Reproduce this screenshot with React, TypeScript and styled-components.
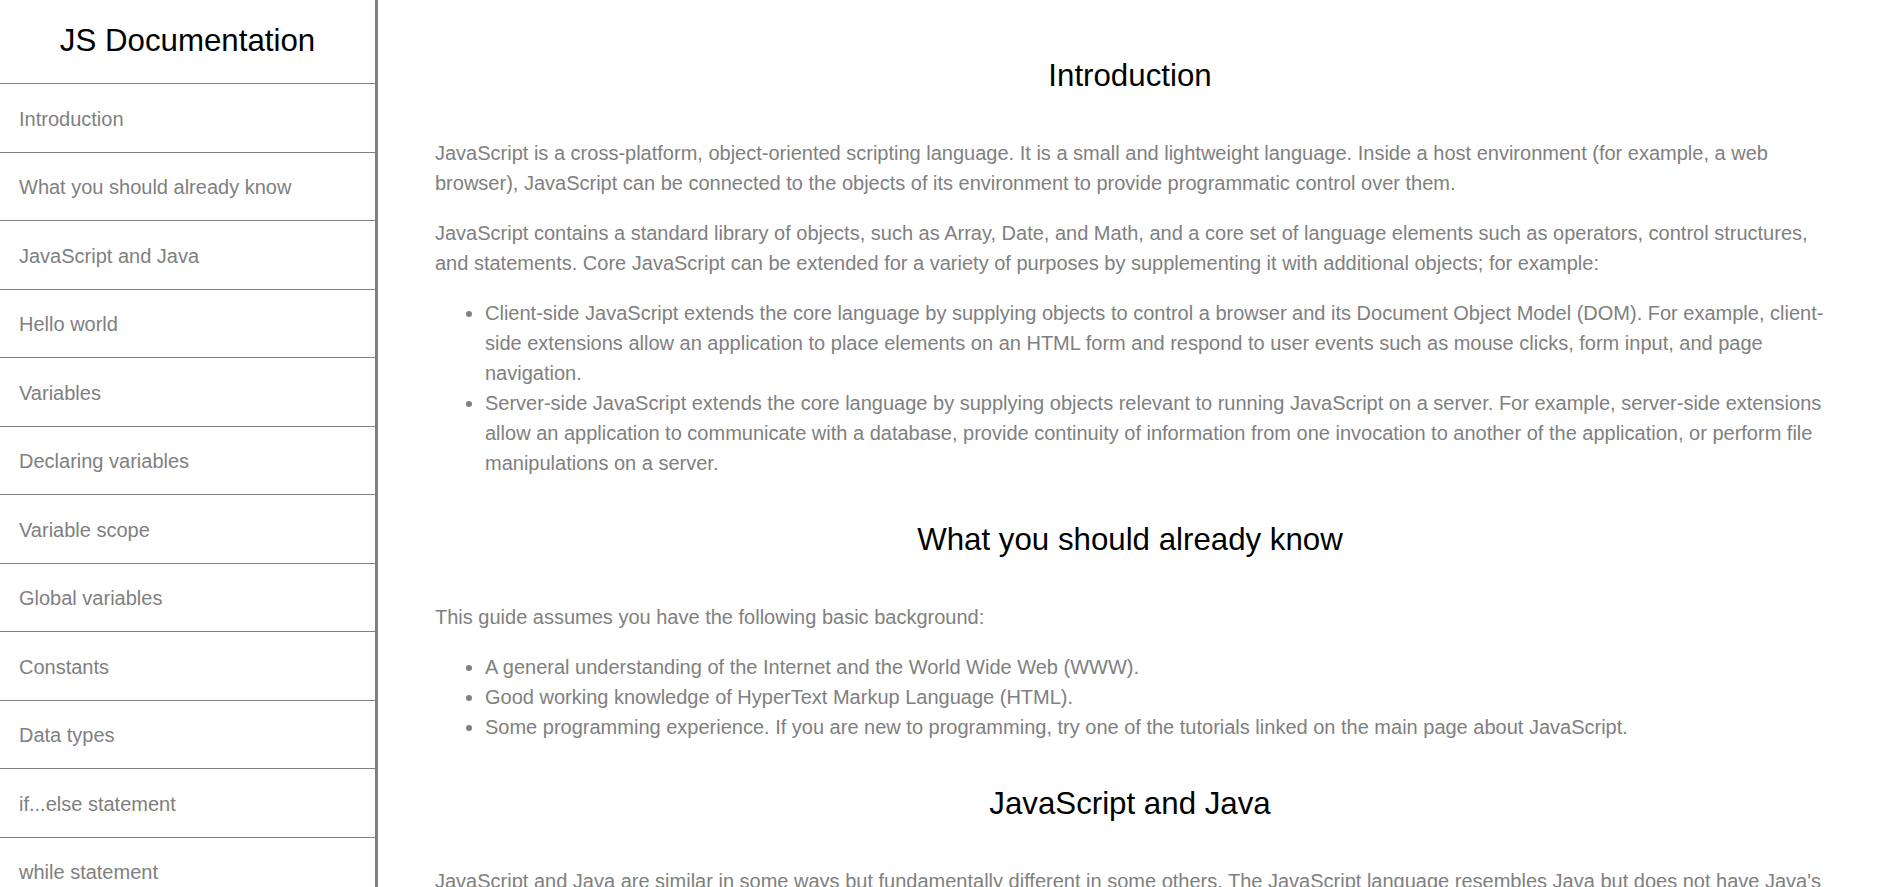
import React from "react";
import styled, { createGlobalStyle } from "styled-components";

const GlobalStyle = createGlobalStyle`
  html, body {
    margin: 0;
    padding: 0;
    height: 100%;
    overflow: hidden;
    background: #ffffff;
  }
  body {
    font-family: "Liberation Sans", Arial, "Helvetica Neue", sans-serif;
  }
  * { box-sizing: border-box; }
`;

const Page = styled.div`
  display: flex;
  height: 100vh;
  overflow: hidden;
`;

const Nav = styled.nav`
  flex: 0 0 378px;
  width: 378px;
  height: 100%;
  border-right: 3px solid #808080;
  overflow: hidden;
  display: flex;
  flex-direction: column;
`;

const NavHeader = styled.header`
  margin: 0;
  padding: 23px 0 24px;
  height: 84px;
  font-size: 31.25px;
  line-height: 36px;
  font-weight: 400;
  color: #000;
  text-align: center;
  border-bottom: 1px solid #808080;
`;

const NavList = styled.ul`
  list-style: none;
  margin: 0;
  padding: 0;
`;

const NavItem = styled.li`
  border-bottom: 1px solid #808080;
`;

const NavLink = styled.a`
  display: block;
  padding: 24.5px 19px 22px;
  font-size: 20px;
  line-height: 21px;
  color: #808080;
  text-decoration: none;
`;

const Main = styled.main`
  flex: 1 1 auto;
  height: 100%;
  overflow: hidden;
  padding: 14px 72px 0 57px;
  color: #808080;
  font-size: 20px;
  line-height: 30px;
`;

const Section = styled.section``;

const SectionTitle = styled.header`
  margin: 44px 0 44px;
  font-size: 31.25px;
  line-height: 36px;
  font-weight: 400;
  color: #000;
  text-align: center;
`;

const Para = styled.p`
  margin: 20px 0;
`;

const List = styled.ul`
  margin: 20px 0;
  padding-left: 50px;
  list-style: disc;
`;

const Code = styled.pre`
  margin: 20px 0;
  padding: 15px 20px;
  background: #f7f7f7;
  color: #333;
  font-family: "Liberation Mono", "Courier New", monospace;
  font-size: 18px;
  line-height: 26px;
`;

type Block =
  | { kind: "p"; text: string }
  | { kind: "ul"; items: string[] }
  | { kind: "code"; text: string };

type Doc = { title: string; blocks: Block[] };

const docs: Doc[] = [
  {
    title: "Introduction",
    blocks: [
      {
        kind: "p",
        text:
          "JavaScript is a cross-platform, object-oriented scripting language. It is a small and lightweight language. Inside a host environment (for example, a web browser), JavaScript can be connected to the objects of its environment to provide programmatic control over them.",
      },
      {
        kind: "p",
        text:
          "JavaScript contains a standard library of objects, such as Array, Date, and Math, and a core set of language elements such as operators, control structures, and statements. Core JavaScript can be extended for a variety of purposes by supplementing it with additional objects; for example:",
      },
      {
        kind: "ul",
        items: [
          "Client-side JavaScript extends the core language by supplying objects to control a browser and its Document Object Model (DOM). For example, client-side extensions allow an application to place elements on an HTML form and respond to user events such as mouse clicks, form input, and page navigation.",
          "Server-side JavaScript extends the core language by supplying objects relevant to running JavaScript on a server. For example, server-side extensions allow an application to communicate with a database, provide continuity of information from one invocation to another of the application, or perform file manipulations on a server.",
        ],
      },
    ],
  },
  {
    title: "What you should already know",
    blocks: [
      { kind: "p", text: "This guide assumes you have the following basic background:" },
      {
        kind: "ul",
        items: [
          "A general understanding of the Internet and the World Wide Web (WWW).",
          "Good working knowledge of HyperText Markup Language (HTML).",
          "Some programming experience. If you are new to programming, try one of the tutorials linked on the main page about JavaScript.",
        ],
      },
    ],
  },
  {
    title: "JavaScript and Java",
    blocks: [
      {
        kind: "p",
        text:
          "JavaScript and Java are similar in some ways but fundamentally different in some others. The JavaScript language resembles Java but does not have Java's static typing and strong type checking. JavaScript follows most Java expression syntax, naming conventions and basic control-flow constructs which was the reason why it was renamed from LiveScript to JavaScript.",
      },
      {
        kind: "p",
        text:
          "In contrast to Java's compile-time system of classes built by declarations, JavaScript supports a runtime system based on a small number of data types representing numeric, Boolean, and string values. JavaScript has a prototype-based object model instead of the more common class-based object model.",
      },
    ],
  },
  {
    title: "Hello world",
    blocks: [
      {
        kind: "p",
        text:
          "To get started with writing JavaScript, open the Scratchpad and write your first \"Hello world\" JavaScript code:",
      },
      { kind: "code", text: 'function greetMe(yourName) { alert("Hello " + yourName); }\ngreetMe("World");' },
    ],
  },
];

const navItems = [
  "Introduction",
  "What you should already know",
  "JavaScript and Java",
  "Hello world",
  "Variables",
  "Declaring variables",
  "Variable scope",
  "Global variables",
  "Constants",
  "Data types",
  "if...else statement",
  "while statement",
  "Function declarations",
  "Reference",
];

const slug = (s: string) => s.replace(/[^A-Za-z]+/g, "_");

export default function App() {
  return (
    <>
      <GlobalStyle />
      <Page>
        <Nav id="navbar">
          <NavHeader>JS Documentation</NavHeader>
          <NavList>
            {navItems.map((item) => (
              <NavItem key={item}>
                <NavLink href={`#${slug(item)}`}>{item}</NavLink>
              </NavItem>
            ))}
          </NavList>
        </Nav>
        <Main id="main-doc">
          {docs.map((doc) => (
            <Section key={doc.title} id={slug(doc.title)}>
              <SectionTitle>{doc.title}</SectionTitle>
              {doc.blocks.map((b, i) => {
                if (b.kind === "p") return <Para key={i}>{b.text}</Para>;
                if (b.kind === "code") return <Code key={i}>{b.text}</Code>;
                return (
                  <List key={i}>
                    {b.items.map((it) => (
                      <li key={it}>{it}</li>
                    ))}
                  </List>
                );
              })}
            </Section>
          ))}
        </Main>
      </Page>
    </>
  );
}
